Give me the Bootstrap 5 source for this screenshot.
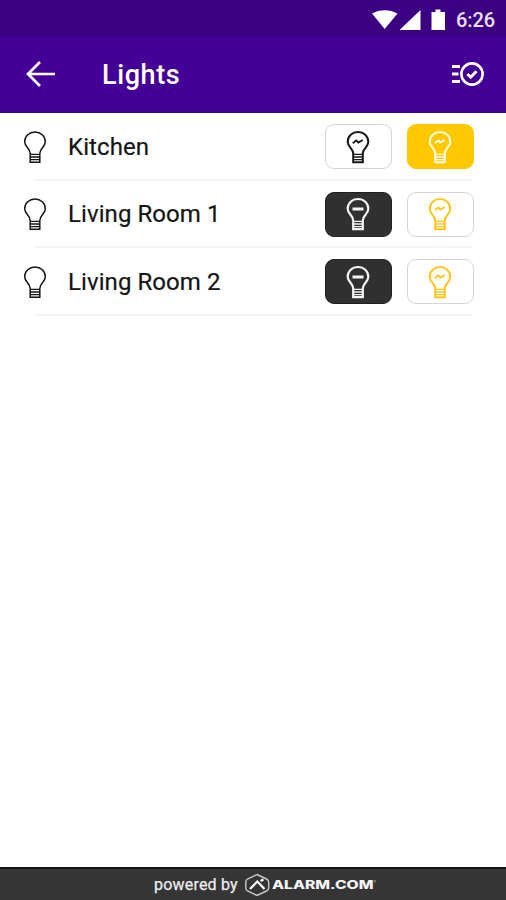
<!DOCTYPE html>
<html lang="en">
<head>
<meta charset="utf-8">
<meta name="viewport" content="width=device-width, initial-scale=1">
<title>Lights</title>
<link href="https://cdn.jsdelivr.net/npm/bootstrap@5.3.0/dist/css/bootstrap.min.css" rel="stylesheet">
<style>
body{font-family:Roboto,"Liberation Sans",sans-serif;height:900px;color:#151515;overflow:hidden}
svg{display:block;flex:none}
.status-bar{height:36px;background:#3c0082;padding-right:11px;padding-top:3px}
.clock{font-size:20px;font-weight:500;line-height:32px;color:#e9e0f3;margin-left:9px;letter-spacing:-.1px}
.app-bar{height:77px;background:#440096;border-bottom:1px solid #2a0890;padding:0 22px 0 26px}
.app-title{font-size:27px;font-weight:500;line-height:32px;margin-left:46px;padding-top:2px;letter-spacing:.6px}
.light-row{height:67.5px;margin-left:34px;margin-right:33px;padding-top:2px;border-bottom:2px solid #f5f5f5}
.row-bulb{margin-left:-11px}
.light-name{font-size:24px;line-height:30px;margin-left:21px;letter-spacing:.08px;-webkit-text-stroke:.2px #151515}
.light-actions{gap:15px;margin-right:-.5px}
.light-btn{width:67px;height:45px;border-radius:9px;border:1.5px solid #d4d4d4;background:#fff;color:#161616}
.light-btn.is-off{background:#303030;border-color:#202020;color:#f4f4f4}
.light-btn.on{color:#fdc51c}
.light-btn.on.active-on{background:#fec900;border-color:#fec900;color:#fffbe6}
.brand-bar{height:33px;background:#353535;border-top:2px solid #161616;padding-left:154px}
.powered{font-size:16px;line-height:20px;color:#ededed;letter-spacing:.2px;-webkit-text-stroke:.25px #ededed}
.brand-logo{margin-left:7px}
</style>
<script src="https://cdn.jsdelivr.net/npm/bootstrap@5.3.0/dist/js/bootstrap.bundle.min.js"></script>
</head>
<body class="d-flex flex-column bg-white m-0">
<svg width="0" height="0" class="position-absolute" aria-hidden="true">
  <symbol id="bulb" viewBox="0 0 24 34">
    <path d="M7.200 23.500C7.200 18.300 1.700 17.300 1.700 11.700C1.700 6 6.300 2 12 2S22.300 6 22.300 11.700C22.300 17.300 16.800 18.300 16.800 23.500V32.200H7.200Z" fill="none" stroke="currentColor"/>
    <path d="M7.200 24.300H16.800M7.200 27H16.800M7.200 29.700H16.800" fill="none" stroke="currentColor" stroke-width="1.300"/>
  </symbol>
  <symbol id="spark" viewBox="0 0 24 34">
    <path d="M6.800 13.200L10.300 10.400L12.300 12.600L16.800 10" fill="none" stroke="currentColor" stroke-width="1.800"/>
  </symbol>
</svg>

<div class="status-bar d-flex align-items-center justify-content-end flex-shrink-0">
  <svg width="76" height="24" viewBox="0 0 76 24" fill="#fff"><path d="M1 5.500C8.500 1 19 1 26.500 5.500L13.700 21ZM28.500 22L49.500 2V22ZM60.500 4H64.500V1.500H69.500V4H74V22H60.500Z"/></svg>
  <span class="clock">6:26</span>
</div>

<header class="app-bar d-flex align-items-center text-white flex-shrink-0">
  <svg width="30" height="28" viewBox="0 0 30 28" fill="none" stroke="#fff" stroke-width="2.700"><path d="M14 2L2 14L14 26M2 14H29"/></svg>
  <h1 class="app-title mb-0">Lights</h1>
  <svg class="ms-auto" width="32" height="26" viewBox="0 0 32 26" fill="none" stroke="#fff"><path d="M0 5.500H8M0 13H6.500M0 20.500H8" stroke-width="3"/><circle cx="20" cy="13" r="10.600" stroke-width="2.600"/><path d="M15.300 13L18.700 16.200L24.500 10.200" stroke-width="3"/></svg>
</header>

<main class="flex-grow-1">
  <div class="light-row d-flex align-items-center">
    <svg class="row-bulb" width="24" height="34" stroke-width="1.500"><use href="#bulb"/></svg>
    <span class="light-name">Kitchen</span>
    <div class="d-flex ms-auto light-actions">
      <button class="light-btn d-flex align-items-center justify-content-center p-0" aria-label="Off"><svg width="24" height="34" stroke-width="2"><use href="#bulb"/><use href="#spark"/></svg></button>
      <button class="light-btn on active-on d-flex align-items-center justify-content-center p-0" aria-label="On"><svg width="24" height="34" stroke-width="2"><use href="#bulb"/><use href="#spark"/></svg></button>
    </div>
  </div>
  <div class="light-row d-flex align-items-center">
    <svg class="row-bulb" width="24" height="34" stroke-width="1.500"><use href="#bulb"/></svg>
    <span class="light-name">Living Room 1</span>
    <div class="d-flex ms-auto light-actions">
      <button class="light-btn is-off d-flex align-items-center justify-content-center p-0" aria-label="Off"><svg width="24" height="34" stroke-width="2.200"><use href="#bulb"/><path d="M6.500 12H17.500" stroke="currentColor" stroke-width="3"/></svg></button>
      <button class="light-btn on d-flex align-items-center justify-content-center p-0" aria-label="On"><svg width="24" height="34" stroke-width="2"><use href="#bulb"/><use href="#spark"/></svg></button>
    </div>
  </div>
  <div class="light-row d-flex align-items-center">
    <svg class="row-bulb" width="24" height="34" stroke-width="1.500"><use href="#bulb"/></svg>
    <span class="light-name">Living Room 2</span>
    <div class="d-flex ms-auto light-actions">
      <button class="light-btn is-off d-flex align-items-center justify-content-center p-0" aria-label="Off"><svg width="24" height="34" stroke-width="2.200"><use href="#bulb"/><path d="M6.500 12H17.500" stroke="currentColor" stroke-width="3"/></svg></button>
      <button class="light-btn on d-flex align-items-center justify-content-center p-0" aria-label="On"><svg width="24" height="34" stroke-width="2"><use href="#bulb"/><use href="#spark"/></svg></button>
    </div>
  </div>
</main>

<footer class="brand-bar d-flex align-items-center flex-shrink-0">
  <span class="powered">powered by</span>
  <svg class="brand-logo" width="134" height="24" viewBox="0 0 134 24">
    <path d="M12 1.500L21.500 6Q23.700 7 23.700 9V15Q23.700 17 21.500 18L12 22.500L2.500 18Q.8 17 .8 15V9Q.8 7 2.500 6Z" fill="none" stroke="#c9c9c9" stroke-width="1.400"/>
    <path d="M5 16L12.300 8.500L19.500 16M15.500 8L18.500 6.500" fill="none" stroke="#fff" stroke-width="2.200"/>
    <text x="27" y="16" font-family="Inter,sans-serif" font-weight="800" font-size="11.500" fill="#f5f5f5" textLength="101.500" lengthAdjust="spacingAndGlyphs">ALARM.COM</text>
    <text x="128.500" y="10" font-family="Inter,sans-serif" font-size="4" fill="#ccc">®</text>
  </svg>
</footer>
</body>
</html>
